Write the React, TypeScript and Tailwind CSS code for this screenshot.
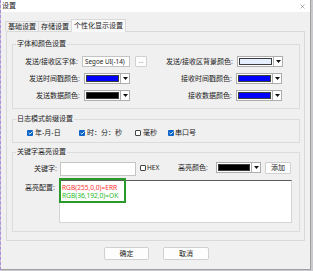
import React from 'react';
import { X } from 'lucide-react';

const Arrow = () => (
  <div className="flex justify-center items-center bg-white border border-[#adadad] border-l-0 w-[9px] h-[11px]">
    <svg width="5" height="3" viewBox="0 0 5 3">
      <path d="M0 0h5L2.5 3z" fill="#111" />
    </svg>
  </div>
);

const ColorCombo = ({ color, w = 37 }: { color: string; w?: number }) => (
  <div className="flex">
    <div className="bg-white p-px border border-[#adadad] h-[11px]" style={{ width: w }}>
      <div className="border border-[#3c3c3c] h-full" style={{ background: color }} />
    </div>
    <Arrow />
  </div>
);

const Check = ({ on }: { on: boolean }) =>
  on ? (
    <div className="flex justify-center items-center bg-[#0a64c8] rounded-[1px] w-[6px] h-[6px]">
      <svg width="5" height="4" viewBox="0 0 5 4">
        <path d="M0.6 2l1.3 1.2L4.4 0.6" stroke="#fff" strokeWidth="0.9" fill="none" />
      </svg>
    </div>
  ) : (
    <div className="bg-white border border-[#444] rounded-[1px] w-[6px] h-[6px]" />
  );

const Label = ({ w, children }: { w: number; children: React.ReactNode }) => (
  <div className="text-[#222] text-[7px] text-right leading-[11px] whitespace-nowrap" style={{ width: w }}>
    {children}
  </div>
);

export default function App() {
  return (
    <div className="flex bg-[#c9c9ce] w-[313px] h-[271px] overflow-hidden font-['Liberation_Sans','Noto_Sans_CJK_SC',sans-serif] text-[#222]">
      <div className="border-[#a98ee0] border-l border-dashed w-px h-[270px]" />
      <div className="flex flex-col bg-[#f0f0f0] border-[#a0a0a0] border-r border-b w-[310px] h-[270px]">
        {/* title bar */}
        <div className="flex justify-between items-center bg-white pr-[4px] pl-[1px] h-[12px]">
          <span className="text-[7px] leading-[12px]">设置</span>
          <X size={7} strokeWidth={1.3} color="#333" />
        </div>

        {/* tabs */}
        <div className="z-10 relative flex items-end -mb-px pl-[4px] h-[20px]">
          <div className="mb-px border-[#d9d9d9] border-x border-t w-[34px] h-[10px] text-[7px] text-center leading-[10px]">基础设置</div>
          <div className="mb-px -ml-px border-[#d9d9d9] border-x border-t w-[34px] h-[10px] text-[7px] text-center leading-[10px]">存储设置</div>
          <div className="bg-[#f9f9f9] -ml-px border-[#d9d9d9] border-x border-t w-[55px] h-[13px] text-[7px] text-center leading-[11px]">个性化显示设置</div>
        </div>

        {/* panel */}
        <div className="ml-[5px] px-[5px] border border-[#d9d9d9] w-[299px] h-[210px]">
          <fieldset className="mt-[7px] pb-[7px] border border-[#dcdcdc] w-[288px]">
            <legend className="ml-[3px] px-px text-[7px] leading-[10px]">字体和颜色设置</legend>
            <div className="flex items-center mt-[7px] h-[11px]">
              <Label w={65}>发送/接收区字体:</Label>
              <div className="bg-white ml-[4px] pl-[2px] border border-[#c4c4c4] w-[48px] h-[11px] font-['Noto_Sans',sans-serif] text-[6.3px] leading-[9px]">Segoe UI(-14)</div>
              <div className="bg-[#fdfdfd] ml-[5px] border border-[#d0d0d0] rounded-[1px] w-[12px] h-[11px] text-[6px] text-center leading-[8px]">...</div>
              <Label w={86}>发送/接收区背景颜色:</Label>
              <div className="ml-[4px]"><ColorCombo color="#e6efff" /></div>
            </div>
            <div className="flex items-center mt-[6px] h-[11px]">
              <Label w={67}>发送时间戳颜色:</Label>
              <div className="ml-[4px]"><ColorCombo color="#0000ff" /></div>
              <Label w={102}>接收时间戳颜色:</Label>
              <div className="ml-[4px]"><ColorCombo color="#0000ff" /></div>
            </div>
            <div className="flex items-center mt-[6px] h-[11px]">
              <Label w={67}>发送数据颜色:</Label>
              <div className="ml-[4px]"><ColorCombo color="#000000" /></div>
              <Label w={102}>接收数据颜色:</Label>
              <div className="ml-[4px]"><ColorCombo color="#0000ff" /></div>
            </div>
          </fieldset>

          <fieldset className="mt-[5px] pb-[5px] border border-[#dcdcdc] w-[288px]">
            <legend className="ml-[3px] px-px text-[7px] leading-[10px]">日志模式前缀设置</legend>
            <div className="flex items-center mt-[4px] ml-[14px] h-[9px] text-[7px] leading-[9px]">
              <div className="flex items-center gap-[2px] w-[52px]"><Check on />年-月-日</div>
              <div className="flex items-center gap-[2px] w-[56px]"><Check on />时：分：秒</div>
              <div className="flex items-center gap-[2px] w-[33px]"><Check on={false} />毫秒</div>
              <div className="flex items-center gap-[1px]"><Check on />串口号</div>
            </div>
          </fieldset>

          <fieldset className="mt-[4px] pb-[8px] border border-[#dcdcdc] w-[288px]">
            <legend className="ml-[3px] px-px text-[7px] leading-[10px]">关键字高亮设置</legend>
            <div className="flex items-start mt-[5px] h-[14px]">
              <div className="pt-[1px] w-[44px] text-[7px] text-right leading-[12px]">关键字:</div>
              <div className="bg-white ml-[3px] border border-[#c4c4c4] w-[76px] h-[14px]" />
              <div className="flex items-center gap-[1px] ml-[4px] w-[38px] h-[12px] text-[6.5px]">
                <Check on={false} />
                <span className="font-['Noto_Sans',sans-serif]">HEX</span>
              </div>
              <div className="w-[30px] text-[7px] text-right leading-[12px] whitespace-nowrap">高亮颜色:</div>
              <div className="ml-[8px]"><ColorCombo color="#000000" w={36} /></div>
              <div className="bg-[#fdfdfd] ml-[4px] border border-[#d0d0d0] rounded-[1px] w-[26px] h-[12px] text-[7px] text-center leading-[10px]">添加</div>
            </div>
            <div className="flex items-start mt-[4px]">
              <div className="pt-[3px] pr-[4px] w-[46px] text-[7px] text-right leading-[9px]">高亮配置:</div>
              <div className="relative bg-white pt-[3px] pl-[2px] border border-[#d4d4d4] border-t-[#5a5a5a] w-[233px] h-[43px] font-['Noto_Sans',sans-serif] text-[6.6px] leading-[7.5px]">
                <div className="text-[#ff2f2f]">RGB(255,0,0)=ERR</div>
                <div className="text-[#25b825]">RGB(36,192,0)=OK</div>
                <div className="top-[-3px] left-[-1px] absolute border-[#2a9a2a] border-2 w-[67px] h-[25px]" />
              </div>
            </div>
          </fieldset>
        </div>

        {/* buttons */}
        <div className="flex gap-[14px] mt-[6px] ml-[103px]">
          <div className="bg-[#fdfdfd] border border-[#d0d0d0] rounded-[2px] w-[45px] h-[13px] text-[7px] text-center leading-[11px]">确定</div>
          <div className="bg-[#fdfdfd] border border-[#d0d0d0] rounded-[2px] w-[46px] h-[13px] text-[7px] text-center leading-[11px]">取消</div>
        </div>
      </div>
    </div>
  );
}
